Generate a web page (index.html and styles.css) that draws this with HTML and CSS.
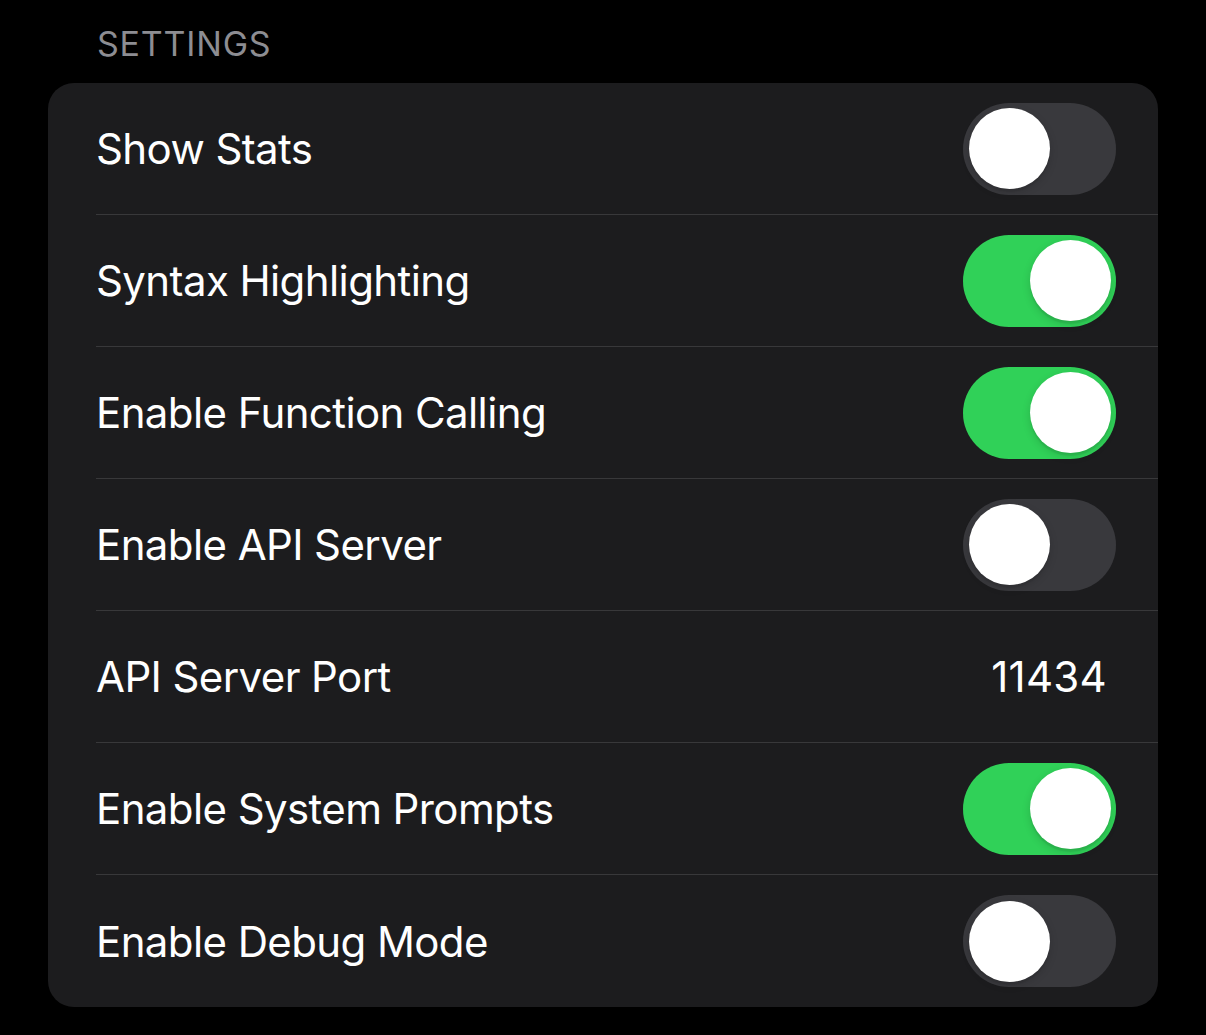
FILE: index.html
```html
<!DOCTYPE html>
<html lang="en">
<head>
<meta charset="utf-8">
<title>Settings</title>
<link rel="stylesheet" href="styles.css">
</head>
<body>
<div class="page">
  <div class="section-title">SETTINGS</div>
  <div class="card">
    <div class="row"><span class="label">Show Stats</span><span class="toggle"><span class="knob"></span></span></div>
    <div class="row"><span class="label">Syntax Highlighting</span><span class="toggle on"><span class="knob"></span></span></div>
    <div class="row"><span class="label">Enable Function Calling</span><span class="toggle on"><span class="knob"></span></span></div>
    <div class="row"><span class="label">Enable API Server</span><span class="toggle"><span class="knob"></span></span></div>
    <div class="row"><span class="label">API Server Port</span><span class="value">11434</span></div>
    <div class="row"><span class="label">Enable System Prompts</span><span class="toggle on"><span class="knob"></span></span></div>
    <div class="row last"><span class="label">Enable Debug Mode</span><span class="toggle"><span class="knob"></span></span></div>
  </div>
</div>
</body>
</html>
```

FILE: styles.css
```css
html, body {
  margin: 0;
  padding: 0;
  background: #000;
}
body {
  font-family: Inter, "Noto Sans", "Liberation Sans", sans-serif;
  color: #fff;
  width: 1206px;
  height: 1035px;
  overflow: hidden;
}
.page {
  padding: 0 48px;
}
.section-title {
  height: 83px;
  box-sizing: border-box;
  padding: 24px 0 0 49px;
  font-size: 34px;
  line-height: 40px;
  color: #8d8d92;
  letter-spacing: 0.8px;
}
.card {
  background: #1c1c1e;
  border-radius: 26px;
  overflow: hidden;
}
.row {
  display: flex;
  align-items: center;
  justify-content: space-between;
  height: 132px;
  box-sizing: border-box;
  margin-left: 48px;
  padding-right: 42px;
  border-bottom: 1px solid #38383a;
}
.row.last {
  border-bottom: none;
}
.label {
  font-size: 42px;
  letter-spacing: -0.6px;
  margin-top: 0;
}
.value {
  font-size: 42px;
  letter-spacing: 0.3px;
  margin-right: 9px;
}
.toggle {
  position: relative;
  width: 153px;
  height: 92px;
  border-radius: 46px;
  background: #39393d;
  flex: none;
}
.toggle.on {
  background: #30d158;
}
.knob {
  position: absolute;
  top: 5.5px;
  left: 5.5px;
  width: 81px;
  height: 81px;
  border-radius: 50%;
  background: #fff;
  box-shadow: 0 3px 8px rgba(0,0,0,0.15), 0 3px 1px rgba(0,0,0,0.06);
}
.toggle.on .knob {
  left: 66.5px;
}
```
